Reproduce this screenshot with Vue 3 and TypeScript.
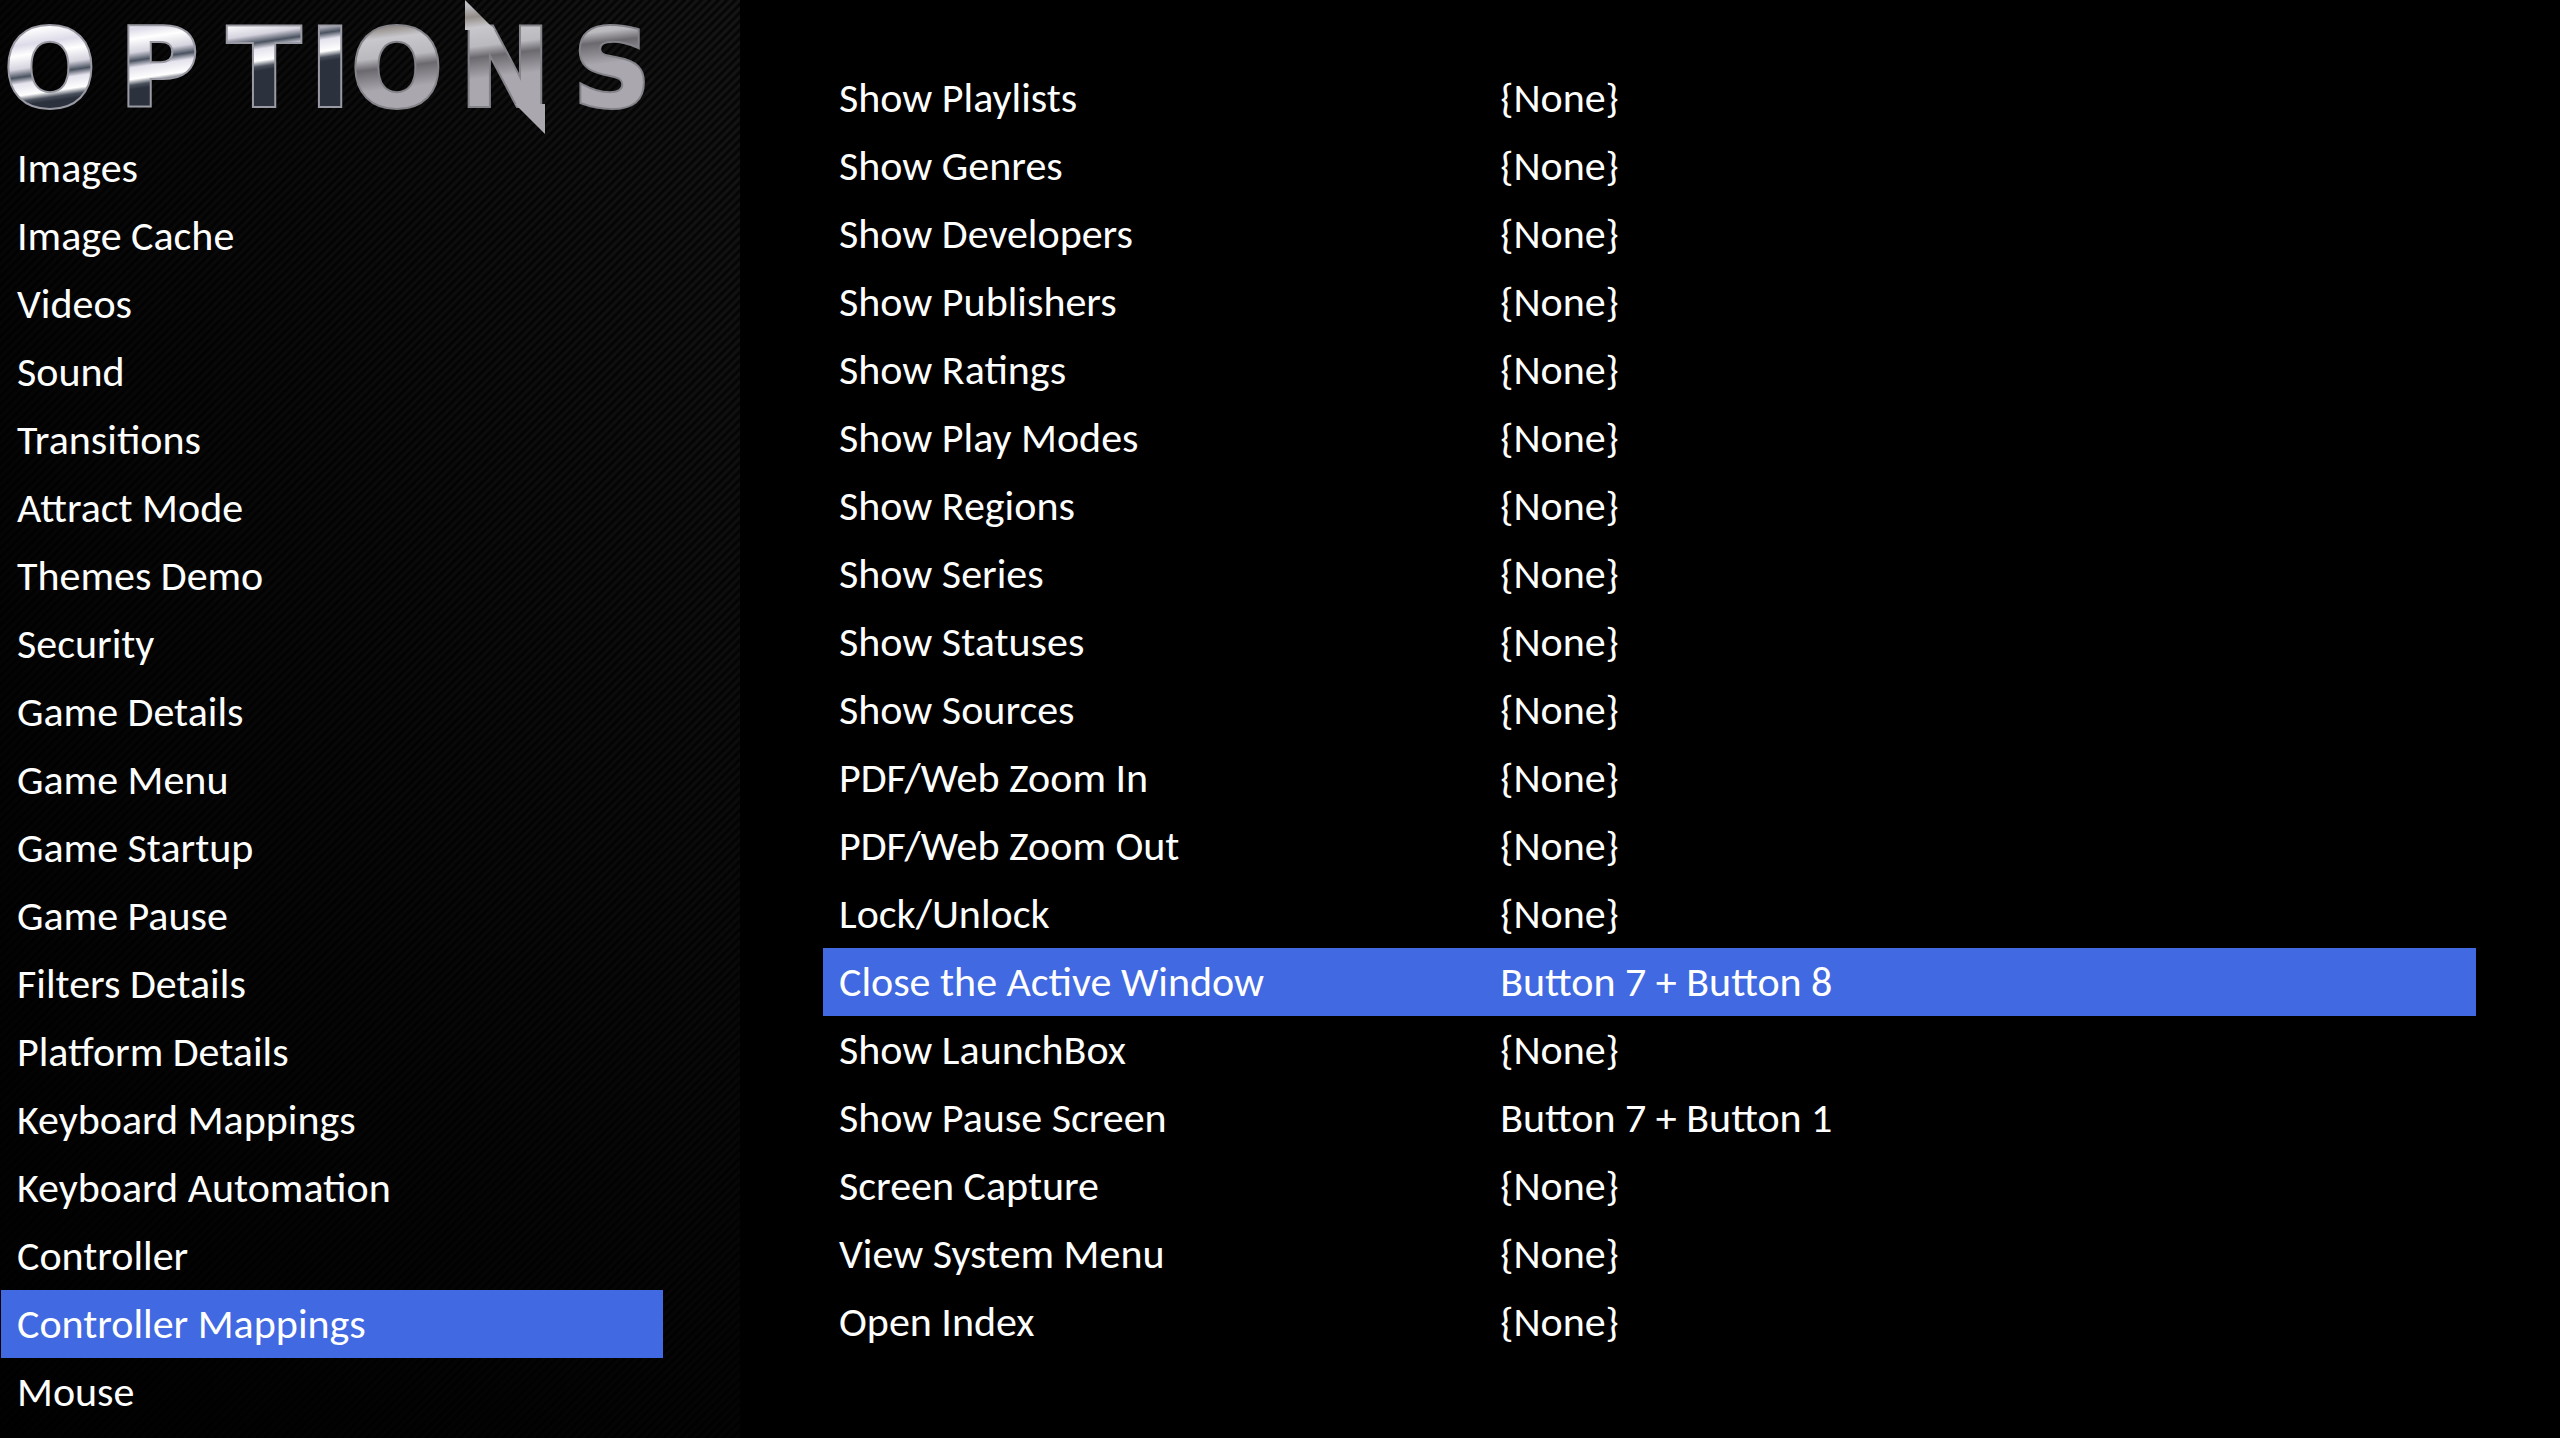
<script setup lang="ts">
const categories: string[] = [
  'Images', 'Image Cache', 'Videos', 'Sound', 'Transitions', 'Attract Mode', 'Themes Demo',
  'Security', 'Game Details', 'Game Menu', 'Game Startup', 'Game Pause', 'Filters Details',
  'Platform Details', 'Keyboard Mappings', 'Keyboard Automation', 'Controller',
  'Controller Mappings', 'Mouse',
]
const activeCategory = 'Controller Mappings'

interface Mapping { action: string; binding: string }

const none = '{None}'
const mappings: Mapping[] = [
  { action: 'Show Playlists', binding: none },
  { action: 'Show Genres', binding: none },
  { action: 'Show Developers', binding: none },
  { action: 'Show Publishers', binding: none },
  { action: 'Show Ratings', binding: none },
  { action: 'Show Play Modes', binding: none },
  { action: 'Show Regions', binding: none },
  { action: 'Show Series', binding: none },
  { action: 'Show Statuses', binding: none },
  { action: 'Show Sources', binding: none },
  { action: 'PDF/Web Zoom In', binding: none },
  { action: 'PDF/Web Zoom Out', binding: none },
  { action: 'Lock/Unlock', binding: none },
  { action: 'Close the Active Window', binding: 'Button 7 + Button 8' },
  { action: 'Show LaunchBox', binding: none },
  { action: 'Show Pause Screen', binding: 'Button 7 + Button 1' },
  { action: 'Screen Capture', binding: none },
  { action: 'View System Menu', binding: none },
  { action: 'Open Index', binding: none },
]
const activeAction = 'Close the Active Window'
</script>

<template>
  <div class="screen">
    <aside class="sidebar">
      <h1 class="title">
        <svg class="logo" viewBox="0 0 664 134" role="img" aria-label="Options">
          <defs>
            <linearGradient id="chrome" gradientUnits="userSpaceOnUse" x1="0" y1="25" x2="12" y2="107">
              <stop offset="0" stop-color="#b9b9c4" />
              <stop offset="0.1" stop-color="#ffffff" />
              <stop offset="0.28" stop-color="#dddbe8" />
              <stop offset="0.4" stop-color="#ffffff" />
              <stop offset="0.56" stop-color="#d5d3de" />
              <stop offset="0.66" stop-color="#4a5260" />
              <stop offset="0.74" stop-color="#e4e2ec" />
              <stop offset="0.88" stop-color="#ffffff" />
              <stop offset="0.95" stop-color="#4a505c" />
              <stop offset="1" stop-color="#2b323e" />
            </linearGradient>
            <linearGradient id="steel" gradientUnits="userSpaceOnUse" x1="0" y1="0" x2="16" y2="134">
              <stop offset="0" stop-color="#d8d7db" />
              <stop offset="0.2" stop-color="#8e7f80" />
              <stop offset="0.3" stop-color="#cfced3" />
              <stop offset="0.46" stop-color="#bcbbc0" />
              <stop offset="0.54" stop-color="#938d88" />
              <stop offset="0.62" stop-color="#c8c7cc" />
              <stop offset="0.76" stop-color="#bab9be" />
              <stop offset="0.84" stop-color="#6b686e" />
              <stop offset="1" stop-color="#aaa8ae" />
            </linearGradient>
          </defs>
          <g class="letters" fill="url(#chrome)" stroke="#9a9aa4">
            <text x="50" y="106">O</text>
            <text x="159" y="106">P</text>
            <text x="264" y="106">T</text>
            <text x="330" y="106">I</text>
          </g>
          <g class="letters" fill="url(#steel)" stroke="#85838a">
            <text x="397" y="106">O</text>
            <text x="505" y="106">N</text>
            <text x="612" y="106">S</text>
          </g>
          <g fill="url(#steel)">
            <path d="M465 0 L495 30 L465 30 Z" />
            <path d="M515 104 L545 104 L545 134 Z" />
          </g>
        </svg>
      </h1>
      <nav class="categories" aria-label="Option categories">
        <a
          v-for="name in categories"
          :key="name"
          href="#"
          class="category"
          :class="{ active: name === activeCategory }"
          :aria-current="name === activeCategory ? 'page' : undefined"
        >{{ name }}</a>
      </nav>
    </aside>
    <main class="content">
      <table class="mappings" aria-label="Controller Mappings">
        <tbody>
          <tr v-for="m in mappings" :key="m.action" :class="{ active: m.action === activeAction }">
            <th scope="row">{{ m.action }}</th>
            <td>{{ m.binding }}</td>
          </tr>
        </tbody>
      </table>
    </main>
  </div>
</template>

<style>
body { margin: 0; background: #000; }
</style>

<style scoped>
.screen {
  display: flex;
  min-height: 100vh;
  background: #000;
  color: #fff;
  font-family: Carlito, Lato, "Noto Sans", sans-serif;
  font-size: 42px;
  line-height: 68px;
}
.sidebar {
  box-sizing: border-box;
  flex: 0 0 740px;
  background:
    linear-gradient(to right, rgba(0, 0, 0, 0.7), rgba(0, 0, 0, 0)),
    linear-gradient(to bottom, rgba(0, 0, 0, 0), rgba(0, 0, 0, 0.8)),
    repeating-linear-gradient(-45deg, #030303 0, #181818 3px, #030303 6px);
}
.title { margin: 0; }
.logo { display: block; width: 664px; height: 134px; overflow: visible; }
.letters {
  font-family: "DejaVu Sans", sans-serif;
  font-weight: 700;
  font-size: 108px;
  text-anchor: middle;
  stroke-width: 4;
  paint-order: stroke;
}
.categories { display: flex; flex-direction: column; width: 662px; padding-left: 1px; }
.category { box-sizing: border-box; padding: 0 16px; color: inherit; text-decoration: none; white-space: nowrap; }
.active { background: #4169e1; }
.content { flex: 1; padding: 64px 84px 0 83px; }
.mappings { width: 100%; border-collapse: collapse; table-layout: fixed; }
.mappings th, .mappings td { padding: 0 16px; font-weight: 400; text-align: left; white-space: nowrap; }
.mappings th { width: 40%; box-sizing: border-box; }
</style>
